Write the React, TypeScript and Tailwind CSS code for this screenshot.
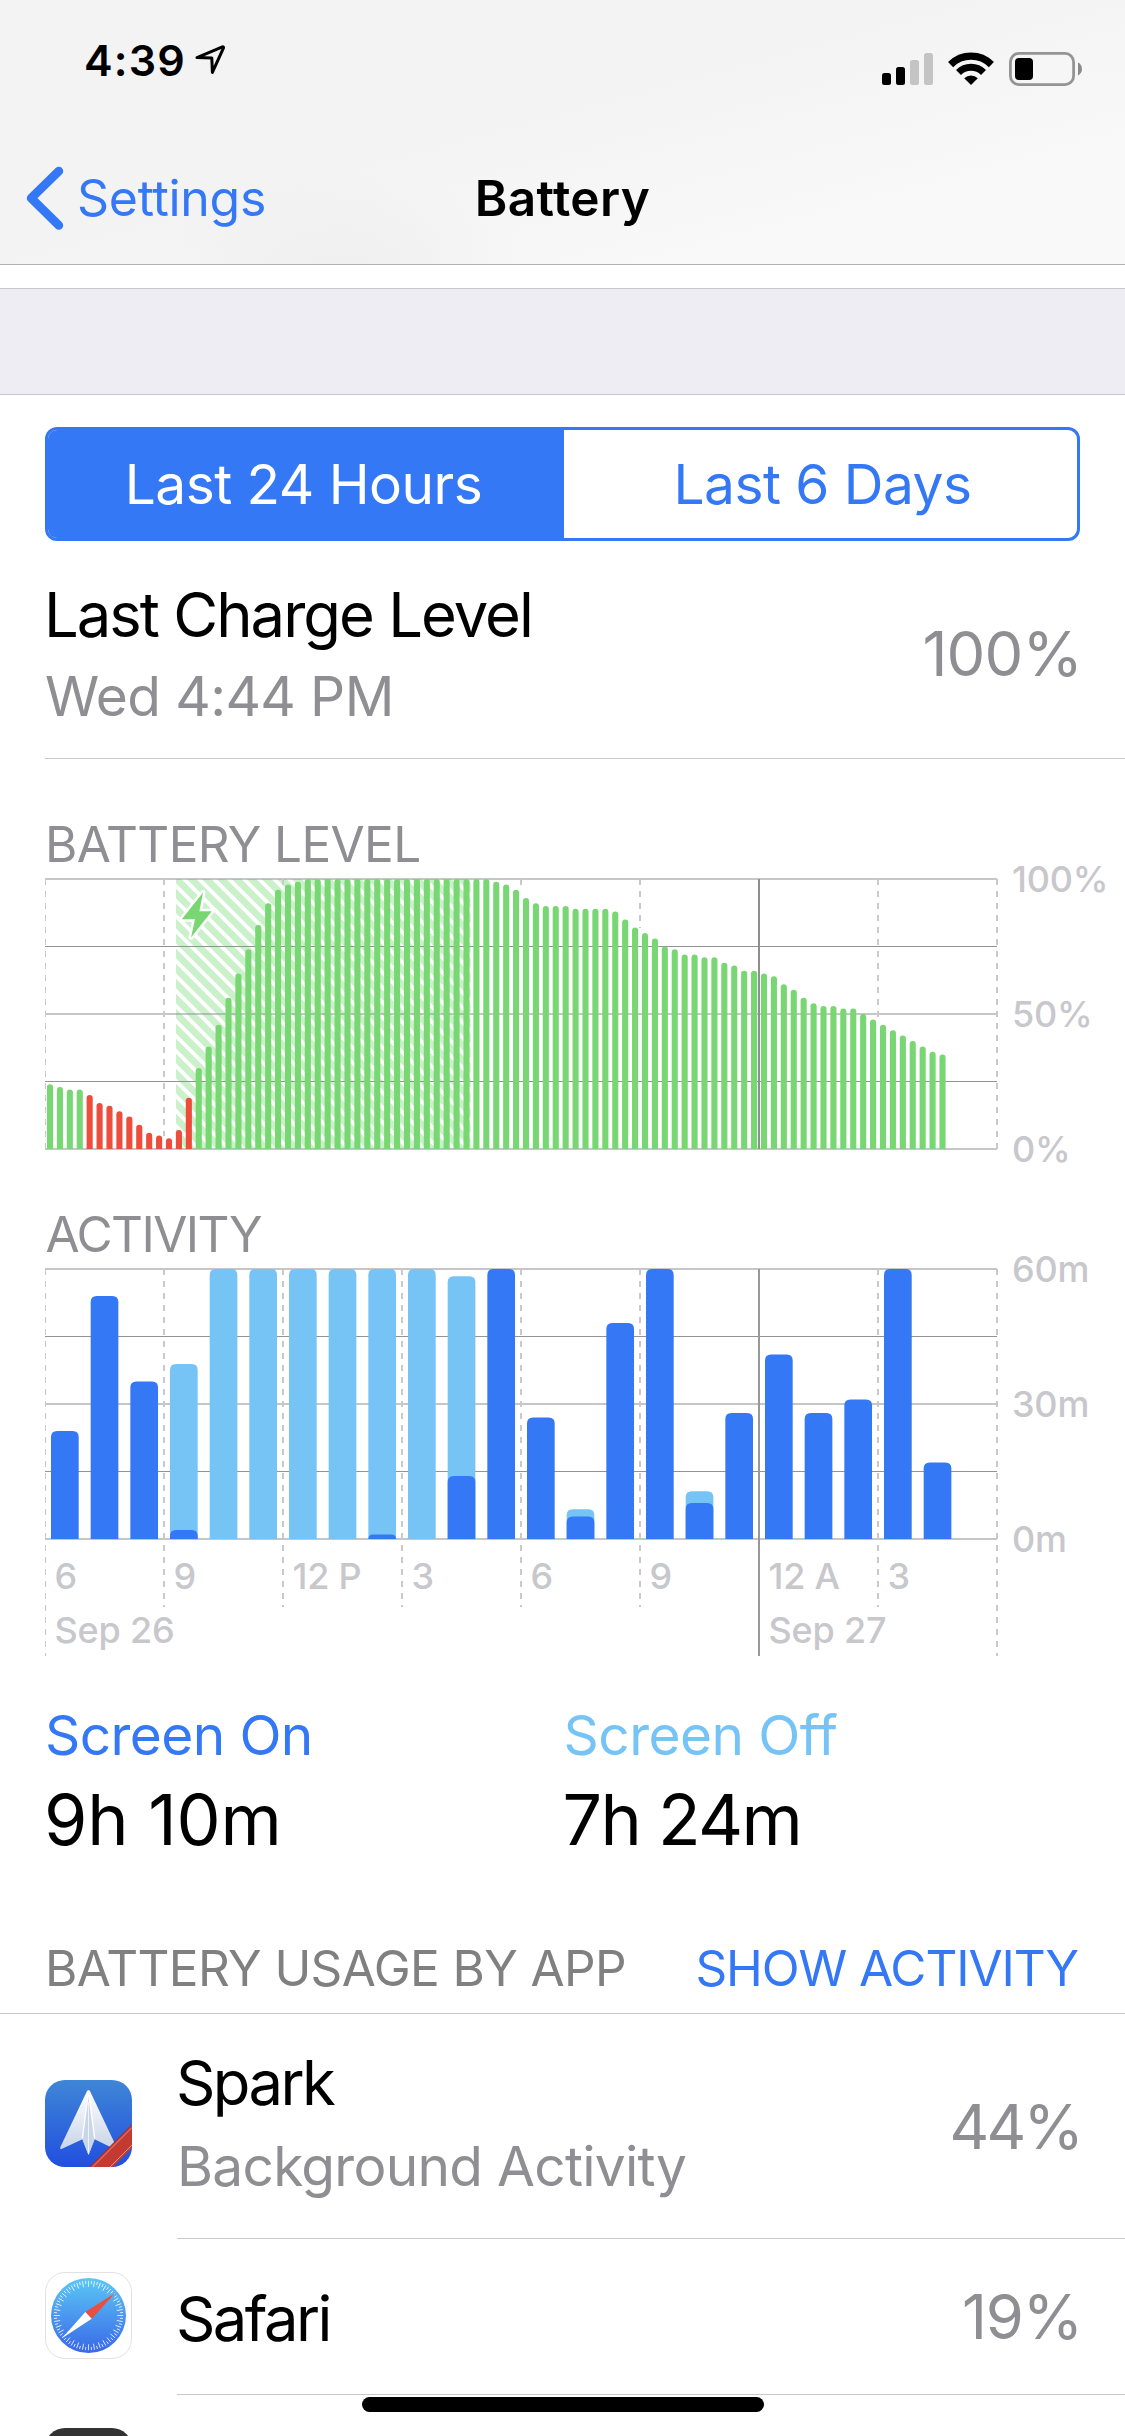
import type { ReactNode } from "react";

const LEFT = 45;
const RIGHT = 997;
const SPAN = RIGHT - LEFT;
const HEIGHT = 270;

const batteryLevels = [
  24, 23, 22, 22, 20, 17, 16, 14, 12, 9, 6, 5, 4, 7, 19, 30, 38, 46, 56, 65, 74, 83, 91, 96, 98, 99,
  100, 100, 100, 100, 100, 100, 100, 100, 100, 100, 100, 100, 100, 100, 100, 100, 100, 100, 100, 99,
  98, 96, 93, 91, 90, 90, 90, 89, 89, 89, 89, 88, 85, 82, 80, 78, 75, 74, 72, 72, 71, 71, 69, 68, 66,
  66, 65, 64, 61, 59, 56, 54, 53, 53, 52, 52, 50, 48, 46, 44, 42, 40, 38, 36, 35,
];

// [minutes with the screen on, total minutes]
const activity: [number, number][] = [
  [24, 24], [54, 54], [35, 35], [2, 38.9], [0, 60], [0, 60], [0, 60], [0, 60], [1, 60], [0, 60],
  [14, 58.4], [60, 60], [27, 27], [5, 6.6], [48, 48], [60, 60], [8, 10.6], [28, 28], [41, 41],
  [28, 28], [31, 31], [60, 60], [17, 17],
];

const hours = ["6", "9", "12 P", "3", "6", "9", "12 A", "3"];

function barPath(x: number, width: number, bottom: number, height: number, radius: number) {
  const r = Math.min(radius, height);
  const top = bottom - height;
  return `M${x} ${bottom}V${top + r}Q${x} ${top} ${x + r} ${top}H${x + width - r}Q${x + width} ${top} ${x + width} ${top + r}V${bottom}Z`;
}

function roundBar(x: number, width: number, bottom: number, height: number) {
  const r = width / 2;
  return `M${x} ${bottom}V${bottom - height + r}a${r} ${r} 0 0 1 ${width} 0V${bottom}Z`;
}

function GridRows({ top }: { top: number }) {
  return (
    <g>
      {[0, 135, 270].map((dy) => (
        <rect key={dy} x={LEFT} y={top + dy - 1} width={SPAN} height={2} fill="#8e8e93" opacity={0.5} />
      ))}
      {[67, 202].map((dy) => (
        <rect key={dy} x={LEFT} y={top + dy} width={SPAN} height={1} fill="#939395" />
      ))}
    </g>
  );
}

function Dashed({ x, top, bottom }: { x: number; top: number; bottom: number }) {
  const narrow = x === LEFT;
  return (
    <line
      x1={narrow ? x + 0.5 : x}
      x2={narrow ? x + 0.5 : x}
      y1={top}
      y2={bottom}
      stroke="#c9c9cb"
      strokeWidth={narrow ? 1 : 2}
      strokeDasharray="6 6"
    />
  );
}

function AxisText({ x, middle, children }: { x: number; middle: number; children: ReactNode }) {
  return (
    <text x={x} y={middle + 13} className="fill-[#c7c7cc] text-[36px] font-medium tracking-[-0.2px]">
      {children}
    </text>
  );
}

function BatteryChart() {
  const top = 15;
  const bottom = top + HEIGHT;
  const pitch = SPAN / 96;
  return (
    <svg className="block shrink-0 overflow-visible" width={1125} height={300} viewBox="0 0 1125 300">
      <defs>
        <pattern id="stripes" width="15" height="15" patternUnits="userSpaceOnUse" patternTransform="translate(176 7)">
          <rect width="15" height="15" fill="#cbf1cb" />
          <path d="M-3 -3L18 18M-3 12L3 18M12 -3L18 3" stroke="#fff" strokeWidth="3.8" />
        </pattern>
      </defs>
      <rect x={176} y={top} width={294.7} height={HEIGHT} fill="url(#stripes)" />
      <GridRows top={top} />
      <Dashed x={45} top={top} bottom={bottom} />
      <Dashed x={164} top={top} bottom={272} />
      <Dashed x={283} top={top} bottom={21} />
      <Dashed x={521} top={top} bottom={21} />
      <Dashed x={640} top={top} bottom={64} />
      <Dashed x={878} top={top} bottom={153} />
      <Dashed x={997} top={top} bottom={bottom} />
      {batteryLevels.map((level, i) => (
        <path
          key={i}
          d={roundBar(LEFT + i * pitch + 1.95, 6.1, bottom, (level / 100) * HEIGHT)}
          fill={i > 3 && i < 15 ? "#ec4d3d" : "#78d773"}
        />
      ))}
      <rect x={758} y={top} width={2} height={HEIGHT} fill="#8e8e90" />
      <path
        d="M203 28.5L181.8 55.3H195L191 73.4L211.8 47.2H199.4Z"
        fill="#78d773"
        stroke="#fff"
        strokeWidth="5"
        strokeLinejoin="round"
        paintOrder="stroke"
      />
      <AxisText x={1012} middle={15}>100%</AxisText>
      <AxisText x={1012} middle={150}>50%</AxisText>
      <AxisText x={1012} middle={285}>0%</AxisText>
    </svg>
  );
}

function ActivityChart() {
  const top = 15;
  const bottom = top + HEIGHT;
  const pitch = SPAN / 24;
  return (
    <svg className="block shrink-0 overflow-visible" width={1125} height={410} viewBox="0 0 1125 410">
      <GridRows top={top} />
      {[45, 997].map((x) => (
        <Dashed key={x} x={x} top={top} bottom={402} />
      ))}
      {[164, 283, 402, 521, 640, 878].map((x) => (
        <Dashed key={x} x={x} top={top} bottom={353} />
      ))}
      {activity.map(([on, total], i) => {
        const x = LEFT + i * pitch + 6;
        return (
          <g key={i}>
            {total > on && <path d={barPath(x, 27.7, bottom, total * 4.5, 6)} fill="#76c4f6" />}
            {on > 0 && <path d={barPath(x, 27.7, bottom, on * 4.5, 6)} fill="#3478f6" />}
          </g>
        );
      })}
      <rect x={758} y={top} width={2} height={387} fill="#98989a" />
      {hours.map((hour, i) => (
        <AxisText key={i} x={54.5 + i * 119} middle={321.5}>
          {hour}
        </AxisText>
      ))}
      <AxisText x={54.5} middle={375.5}>Sep 26</AxisText>
      <AxisText x={768.5} middle={375.5}>Sep 27</AxisText>
      <AxisText x={1012} middle={15}>60m</AxisText>
      <AxisText x={1012} middle={150}>30m</AxisText>
      <AxisText x={1012} middle={285}>0m</AxisText>
    </svg>
  );
}

function StatusIcons() {
  return (
    <svg className="mt-[48px] block" width={204} height={44} viewBox="880 48 204 44">
      <rect x="882" y="73" width="9" height="12" rx="2.5" />
      <rect x="896" y="67" width="9" height="18" rx="2.5" />
      <rect x="910" y="60" width="9" height="25" rx="2.5" fill="#c4c4c4" />
      <rect x="924" y="53" width="9" height="32" rx="2.5" fill="#c4c4c4" />
      <g fill="none" stroke="#000">
        <path d="M950.6 64.6A28.9 28.9 0 0 1 991.4 64.6" strokeWidth="7.2" />
        <path d="M958.5 72.5A17.7 17.7 0 0 1 983.5 72.5" strokeWidth="7" />
      </g>
      <path d="M971 85L964.2 78.2A9.6 9.6 0 0 1 977.8 78.2Z" />
      <rect x="1010.4" y="53.4" width="63.2" height="31.2" rx="8.5" fill="none" stroke="#949494" strokeWidth="2.8" />
      <rect x="1015" y="58" width="18" height="22" rx="4" />
      <path d="M1078 62.5C1083.3 64.8 1083.3 73.2 1078 75.5Z" fill="#8a8a8a" />
    </svg>
  );
}

function Header() {
  return (
    <header className="h-[265px] shrink-0 border-b border-[#b1b1b3] bg-[#f5f5f5] bg-[radial-gradient(ellipse_190px_100px_at_340px_270px,#efefef,transparent),linear-gradient(165deg,#f3f3f4_45%,#f9f9f9_80%)]">
      <div className="flex h-[132px] items-start justify-between pr-[41px] pl-[84px]">
        <div className="flex items-start">
          <span className="text-[43px] leading-[120px] font-semibold tracking-[1.2px]">4:39</span>
          <svg className="mt-[42px] ml-[8px] block" width={34} height={34} viewBox="194 42 34 34">
            <path
              d="M197 57.6L222.4 46.9Q224 46.6 223.4 48.2L212.4 72.4L211.8 58Z"
              fill="none"
              stroke="#000"
              strokeWidth="3"
              strokeLinejoin="round"
            />
          </svg>
        </div>
        <StatusIcons />
      </div>
      <nav className="grid h-[132px] grid-cols-[1fr_auto_1fr] items-center">
        <a className="flex items-center pl-[24px] text-[#3478f6]">
          <svg className="block" width={42} height={66} viewBox="24 165.5 42 66">
            <path d="M58.8 171.6L31.2 198.7L58.8 225.8" fill="none" stroke="#3478f6" strokeWidth="8.8" strokeLinecap="round" strokeLinejoin="round" />
          </svg>
          <span className="ml-[11px] text-[50px] leading-[60px] tracking-[-0.3px]">Settings</span>
        </a>
        <h1 className="text-[49.5px] leading-[60px] font-semibold tracking-[0.4px]">Battery</h1>
        <span />
      </nav>
    </header>
  );
}

function SparkIcon() {
  return (
    <svg className="block" width={87} height={87} viewBox="0 0 87 87">
      <defs>
        <linearGradient id="sparkBg" x1="0" y1="0" x2="0" y2="1">
          <stop offset="0" stopColor="#3f86d6" />
          <stop offset="1" stopColor="#214fdf" />
        </linearGradient>
        <linearGradient id="wing" x1="0" y1="0" x2="0" y2="1">
          <stop offset="0" stopColor="#ffffff" />
          <stop offset="1" stopColor="#c4d0e6" />
        </linearGradient>
        <clipPath id="sparkClip">
          <rect width="87" height="87" rx="20" />
        </clipPath>
      </defs>
      <g clipPath="url(#sparkClip)">
        <rect width="87" height="87" fill="url(#sparkBg)" />
        <path d="M43.5 10Q44.6 10 45.2 11.5L71 66Q72 69.5 68.5 68.4L49.5 59.2L43.5 75L37.5 59.2L16.5 69Q14.3 69.3 15.4 67L41.8 11.5Q42.4 10 43.5 10Z" fill="url(#wing)" />
        <path d="M43.5 12L37 58.5L43.5 75L50 58.5Z" fill="#c9d6e8" />
        <path d="M43.5 12L37.3 58.5M43.5 12L49.7 58.5" stroke="#fff" strokeWidth="1.4" />
        <path d="M43.5 22V74" stroke="#eef3fa" strokeWidth="1" />
        <path d="M87 44.5L44.5 87H68L87 68Z" fill="#c23a30" />
        <path d="M87 47.5L47.5 87M87 65L65 87" stroke="#e3908a" strokeWidth="1" />
        <path d="M87 44.5L44.5 87" stroke="#8e2a3c" strokeWidth="0.8" />
      </g>
    </svg>
  );
}

function SafariIcon() {
  return (
    <svg className="block" width={87} height={87} viewBox="0 0 87 87">
      <defs>
        <linearGradient id="dial" x1="0" y1="0" x2="0" y2="1">
          <stop offset="0" stopColor="#5bc8f5" />
          <stop offset="1" stopColor="#3a68e8" />
        </linearGradient>
      </defs>
      <rect x="0.5" y="0.5" width="86" height="86" rx="19.5" fill="#fff" stroke="#e2e2e2" />
      <circle cx="43.5" cy="43.5" r="37.5" fill="url(#dial)" />
      <g stroke="#fff" strokeWidth="0.75">
        {Array.from({ length: 72 }, (_, i) => (
          <line key={i} x1="43.5" x2="43.5" y1="8.8" y2={i % 2 === 0 ? 14.8 : 12} transform={`rotate(${i * 5} 43.5 43.5)`} />
        ))}
      </g>
      <path d="M70.5 20.8L40.3 40L46.7 46.8Z" fill="#eb4e3d" />
      <path d="M17 66.3L40.3 40L46.7 46.8Z" fill="#fff" />
    </svg>
  );
}

function AppRow({ icon, name, note, percent }: { icon: ReactNode; name: string; note?: string; percent: string }) {
  return (
    <div className="flex shrink-0 pl-[45px]">
      <div className={note ? "mt-[66px] w-[132px]" : "mt-[33px] w-[132px]"}>{icon}</div>
      <div
        className={
          note
            ? "flex h-[225px] flex-1 items-center justify-between border-b border-[#c8c7cc] pr-[44px]"
            : "flex h-[156px] flex-1 items-center justify-between border-b border-[#c8c7cc] pr-[43px]"
        }
      >
        <div className={note ? "mt-[-3px]" : "mt-[5px]"}>
          <div className="-ml-px text-[61.5px] leading-[80px] tracking-[-2.6px]">{name}</div>
          {note && <div className="mt-[3px] text-[55px] leading-[80px] tracking-[-0.72px] text-[#8e8e93]">{note}</div>}
        </div>
        <div className={note ? "mt-px text-[61.5px] leading-[80px] tracking-[-2.8px] text-[#8e8e93]" : "text-[61.5px] leading-[80px] tracking-[-1.2px] text-[#8e8e93]"}>
          {percent}
        </div>
      </div>
    </div>
  );
}

export default function App() {
  return (
    <div className="relative flex h-[2436px] w-[1125px] flex-col overflow-hidden bg-white font-['Inter',sans-serif] whitespace-nowrap text-black">
      <Header />
      <div className="mt-[23px] h-[107px] shrink-0 border-y border-[#c8c7cc] bg-[#eeedf3]" />

      <div className="mx-[45px] mt-[32px] flex h-[114px] shrink-0 overflow-hidden rounded-[12px] border-[3px] border-[#3478f6] text-[55px] tracking-[-0.53px]">
        <div className="flex w-[516px] items-center justify-center bg-[#3478f6] pr-[5px] text-white">Last 24 Hours</div>
        <div className="flex flex-1 items-center justify-center pl-[4px] text-[#3478f6]">Last 6 Days</div>
      </div>

      <div className="ml-[45px] flex h-[218px] shrink-0 justify-between border-b border-[#c8c7cc] pr-[43px]">
        <div className="pt-[33px]">
          <div className="-ml-px text-[61.5px] leading-[82px] tracking-[-1.98px]">Last Charge Level</div>
          <div className="text-[55px] leading-[80px] tracking-[-0.6px] text-[#8e8e93]">Wed 4:44 PM</div>
        </div>
        <div className="text-[61.5px] leading-[226px] tracking-[-0.87px] text-[#8e8e93]">100%</div>
      </div>

      <h2 className="mt-[65px] ml-[45px] shrink-0 text-[49.5px] leading-[40px] tracking-[-0.64px] text-[#8e8e93]">BATTERY LEVEL</h2>
      <BatteryChart />
      <h2 className="mt-[50px] ml-[45.5px] shrink-0 text-[49.5px] leading-[40px] tracking-[-1.55px] text-[#8e8e93]">ACTIVITY</h2>
      <ActivityChart />

      <div className="mx-[45px] mt-[41px] grid shrink-0 grid-cols-2">
        <div>
          <div className="text-[55px] leading-[60px] tracking-[-0.6px] text-[#3478f6]">Screen On</div>
          <div className="mt-[14px] -ml-px text-[70px] leading-[81px] tracking-[-0.1px]">9h 10m</div>
        </div>
        <div>
          <div className="ml-px text-[55px] leading-[60px] tracking-[-0.54px] text-[#76c4f6]">Screen Off</div>
          <div className="mt-[14px] text-[70px] leading-[81px] tracking-[-1.7px]">7h 24m</div>
        </div>
      </div>

      <div className="mt-[78px] flex h-[76px] shrink-0 items-start justify-between border-b border-[#c8c7cc] pr-[47px] pl-[45px] text-[49.5px] leading-[60px]">
        <h2 className="tracking-[-0.6px] text-[#808080]">BATTERY USAGE BY APP</h2>
        <a className="tracking-[-1.1px] text-[#3478f6]">SHOW ACTIVITY</a>
      </div>

      <AppRow icon={<SparkIcon />} name="Spark" note="Background Activity" percent="44%" />
      <AppRow icon={<SafariIcon />} name="Safari" percent="19%" />
      <div className="mt-[33px] ml-[45px] h-[87px] w-[87px] shrink-0 rounded-[20px] bg-[#333333]" />

      <div className="absolute bottom-[24px] left-1/2 h-[15px] w-[402px] -translate-x-1/2 rounded-full bg-black" />
    </div>
  );
}
